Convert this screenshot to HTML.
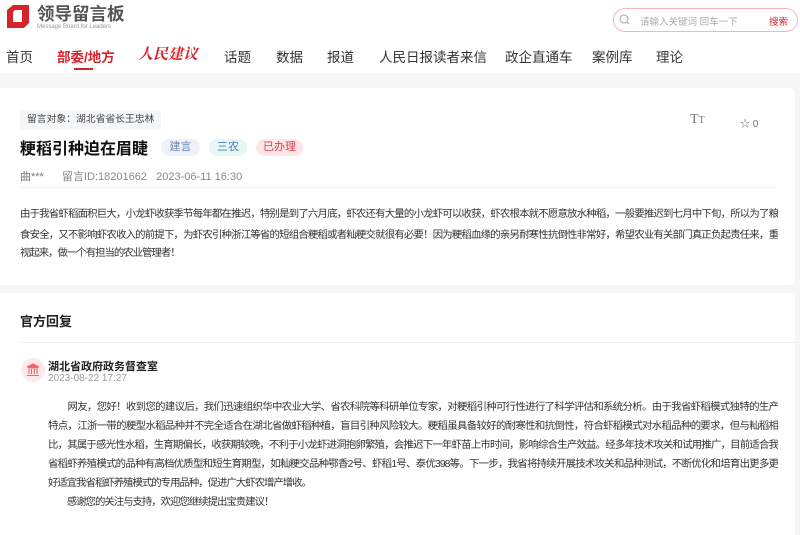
<!DOCTYPE html>
<html><head><meta charset="utf-8"><style>
*{margin:0;padding:0;box-sizing:border-box}
body{width:800px;height:535px;overflow:hidden;background:#f5f6f8;font-family:"Liberation Sans","Noto Sans CJK SC",sans-serif;color:#333;position:relative}
.a{position:absolute;white-space:nowrap}
.hdr{position:absolute;left:0;top:0;width:800px;height:73px;background:#fff}
.nav{font-size:13.5px;color:#333;top:46px}
.card{position:absolute;background:#fff;left:0;width:795px}
.tag{position:absolute;top:139px;height:17px;border-radius:9px;font-size:11px;line-height:17px;text-align:center}
.L{position:absolute;white-space:nowrap;overflow:hidden;text-align:justify;text-align-last:justify;color:#333}
.p1 .L{left:20px;width:758px;font-size:10.4px;letter-spacing:-1px;height:16px}
.p2 .L{left:48px;width:730px;font-size:10.4px;letter-spacing:-1px;height:16px}
</style></head><body>
<div class="hdr"></div>
<svg class="a" style="left:5px;top:5px" width="25" height="24" viewBox="0 0 25 24"><path d="M2 5 L8 0 L24 0 L24 18 L19 23 L2 23 Z M8 7 L8 17 L17 17 L17 5 L10 5 Z" fill="#d7242c" fill-rule="evenodd"/></svg>
<div class="a" style="left:37px;top:5px;font-size:17.5px;line-height:18px;font-weight:bold;color:#555">领导留言板</div>
<div class="a" style="left:37px;top:24px;font-size:6px;line-height:6px;color:#999">Message Board for Leaders</div>
<div class="a" style="left:613px;top:8px;width:185px;height:24px;border:1px solid #f3b6bb;border-radius:12px"></div>
<svg class="a" style="left:619px;top:14px" width="11" height="11" viewBox="0 0 11 11"><circle cx="5" cy="5" r="4" fill="none" stroke="#aaa" stroke-width="1.1"/><path d="M8 8 L10 10" stroke="#aaa" stroke-width="1.1"/></svg>
<div class="a" style="left:640px;top:14px;font-size:9.5px;color:#aaa">请输入关键词 回车一下</div>
<div class="a" style="left:769px;top:14px;font-size:9.5px;color:#d7242c">搜索</div>
<div class="a nav" style="left:6px">首页</div>
<div class="a nav" style="left:57px;color:#d7242c;font-weight:bold">部委/地方</div>
<div class="a" style="left:74px;top:68px;width:19px;height:2px;background:#d7242c"></div>
<div class="a nav" style="left:138px;top:43px;color:#d7242c;font-style:italic;font-weight:bold;font-size:15px;font-family:'Noto Serif CJK SC',serif">人民建议</div>
<div class="a nav" style="left:224px">话题</div>
<div class="a nav" style="left:276px">数据</div>
<div class="a nav" style="left:327px">报道</div>
<div class="a nav" style="left:379px">人民日报读者来信</div>
<div class="a nav" style="left:505px">政企直通车</div>
<div class="a nav" style="left:592px">案例库</div>
<div class="a nav" style="left:656px">理论</div>

<div class="card" style="top:88px;height:197px;border-radius:0 6px 6px 0"></div>
<div class="a" style="left:20px;top:110px;height:20px;background:#f5f6f8;border-radius:2px;font-size:9.8px;line-height:20px;padding:0 7px;color:#444">留言对象：湖北省省长王忠林</div>
<div class="a" style="left:20px;top:135px;font-size:16px;font-weight:bold;color:#111">粳稻引种迫在眉睫</div>
<div class="tag" style="left:161px;width:39px;background:#eef2f8;color:#6a86b0">建言</div>
<div class="tag" style="left:209px;width:38px;background:#e6f7f4;color:#4a7fc0">三农</div>
<div class="tag" style="left:256px;width:47px;background:#fde6e8;color:#e0404a">已办理</div>
<div class="a" style="left:690px;top:112px;font-size:14px;color:#777;font-family:'Liberation Serif',serif">T<span style="font-size:10px">T</span></div>
<div class="a" style="left:740px;top:115px;font-size:10px;color:#777">☆ 0</div>
<div class="a" style="left:20px;top:168px;font-size:11px;color:#777">曲***</div>
<div class="a" style="left:62px;top:168px;font-size:11px;color:#888">留言ID:18201662 &nbsp; 2023-06-11 16:30</div>
<div class="a" style="left:20px;top:187px;width:756px;height:1px;background:#eee"></div>
<div class="p1">
<div class="L" style="top:205px">由于我省虾稻面积巨大，小龙虾收获季节每年都在推迟，特别是到了六月底，虾农还有大量的小龙虾可以收获，虾农根本就不愿意放水种稻，一般要推迟到七月中下旬，所以为了粮</div>
<div class="L" style="top:226px">食安全，又不影响虾农收入的前提下，为虾农引种浙江等省的短组合粳稻或者籼粳交就很有必要！因为粳稻血缘的亲另耐寒性抗倒性非常好，希望农业有关部门真正负起责任来，重</div>
<div class="L" style="top:244px;text-align-last:left">视起来，做一个有担当的农业管理者！</div>
</div>

<div class="card" style="top:293px;height:242px;border-radius:0 6px 0 0"></div>
<div class="a" style="left:20px;top:311px;font-size:13px;font-weight:bold;color:#222">官方回复</div>
<div class="a" style="left:20px;top:342px;width:776px;height:1px;background:#f0f0f0"></div>
<div class="a" style="left:21px;top:358px;width:24px;height:24px;border-radius:50%;background:#fde8ea"></div>
<svg class="a" style="left:26px;top:363px" width="14" height="14" viewBox="0 0 14 14"><path d="M1 4 L7 1 L13 4 Z M2 5 H12 M3 6 V11 M5.5 6 V11 M8.5 6 V11 M11 6 V11 M1 12.5 H13" stroke="#e66" stroke-width="1.1" fill="#e66"/></svg>
<div class="a" style="left:48px;top:358px;font-size:11px;font-weight:bold;color:#222">湖北省政府政务督查室</div>
<div class="a" style="left:48px;top:373px;font-size:10px;color:#999">2023-08-22 17:27</div>
<div class="p2">
<div class="L" style="top:398px">　　网友，您好！收到您的建议后，我们迅速组织华中农业大学、省农科院等科研单位专家，对粳稻引种可行性进行了科学评估和系统分析。由于我省虾稻模式独特的生产</div>
<div class="L" style="top:417px">特点，江浙一带的粳型水稻品种并不完全适合在湖北省做虾稻种植，盲目引种风险较大。粳稻虽具备较好的耐寒性和抗倒性，符合虾稻模式对水稻品种的要求，但与籼稻相</div>
<div class="L" style="top:436px">比，其属于感光性水稻，生育期偏长，收获期较晚，不利于小龙虾进洞抱卵繁殖，会推迟下一年虾苗上市时间，影响综合生产效益。经多年技术攻关和试用推广，目前适合我</div>
<div class="L" style="top:455px">省稻虾养殖模式的品种有高档优质型和短生育期型，如籼粳交品种鄂香2号、虾稻1号、泰优398等。下一步，我省将持续开展技术攻关和品种测试，不断优化和培育出更多更</div>
<div class="L" style="top:474px;text-align-last:left">好适宜我省稻虾养殖模式的专用品种，促进广大虾农增产增收。</div>
<div class="L" style="top:493px;text-align-last:left">　　感谢您的关注与支持，欢迎您继续提出宝贵建议！</div>
</div>
</body></html>
